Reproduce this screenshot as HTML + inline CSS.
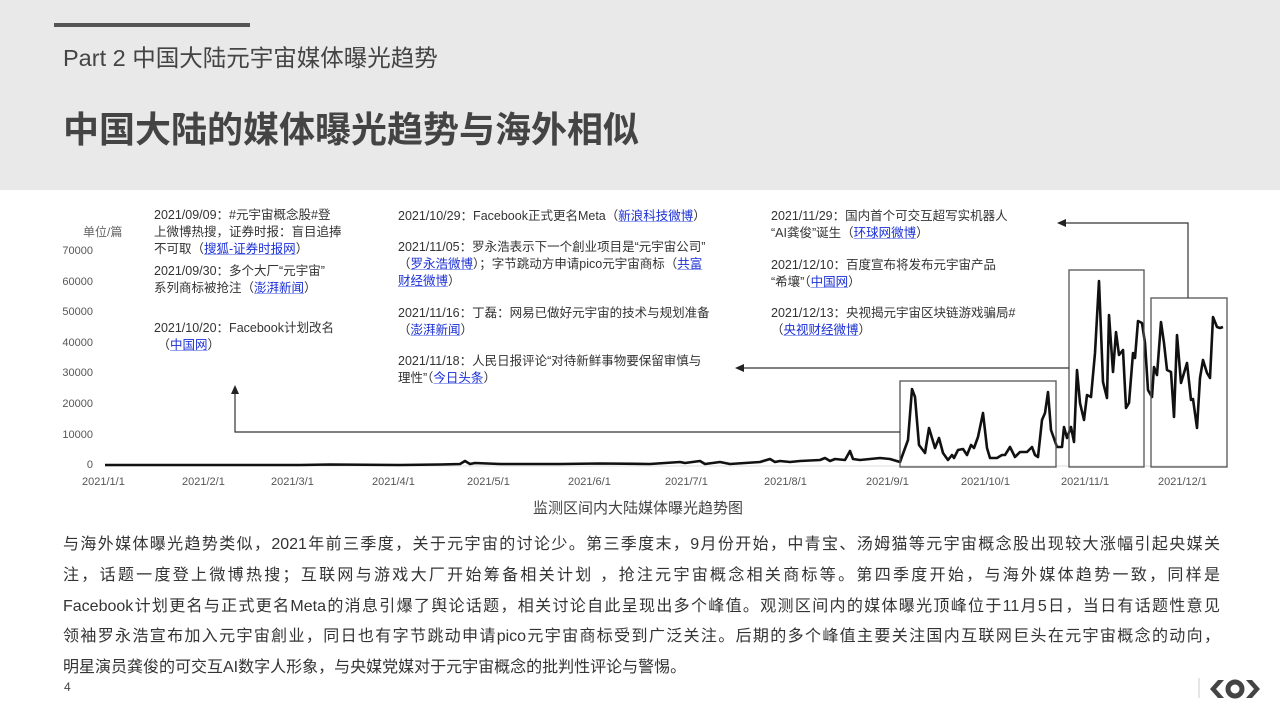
<!DOCTYPE html>
<html><head><meta charset="utf-8"><style>
*{margin:0;padding:0;box-sizing:border-box}
body{width:1280px;height:720px;position:relative;background:#fff;font-family:"Liberation Sans","Noto Sans CJK SC",sans-serif;color:#333;overflow:hidden}
.hdr{position:absolute;left:0;top:0;width:1280px;height:190px;background:#e9e9e9}
.bar{position:absolute;left:54px;top:23px;width:196px;height:4px;background:#555}
.part{position:absolute;left:63px;top:39px;font-size:23.5px;color:#444;white-space:nowrap}
.title{position:absolute;left:63px;top:101px;font-size:36px;font-weight:bold;color:#444;white-space:nowrap}
.ann{position:absolute;font-size:12.5px;line-height:17px;color:#333;white-space:nowrap}
.ann b{font-weight:normal;color:#1a2fd6;text-decoration:underline;text-decoration-color:#9aa6ee}
.yl{position:absolute;font-size:11px;color:#555;width:40px;text-align:right}
.xl{position:absolute;font-size:11px;color:#555;top:476px;white-space:nowrap}
.cap{position:absolute;left:533px;top:497px;font-size:15px;color:#444}
.para{position:absolute;left:63px;top:530px;width:1157px;font-size:16px;line-height:30.8px;color:#333}
.para div{text-align:justify;text-align-last:justify;white-space:nowrap}
.para div.l{text-align-last:left}
</style></head><body>
<div class="hdr"></div><div class="bar"></div>
<div class="part">Part 2 中国大陆元宇宙媒体曝光趋势</div>
<div class="title">中国大陆的媒体曝光趋势与海外相似</div>

<div class="yl" style="top:223px;width:70px;text-align:left;left:83px;font-size:12px;color:#666">单位/篇</div>
<div class="yl" style="left:53px;top:245px">70000</div>
<div class="yl" style="left:53px;top:276px">60000</div>
<div class="yl" style="left:53px;top:306px">50000</div>
<div class="yl" style="left:53px;top:337px">40000</div>
<div class="yl" style="left:53px;top:367px">30000</div>
<div class="yl" style="left:53px;top:398px">20000</div>
<div class="yl" style="left:53px;top:429px">10000</div>
<div class="yl" style="left:53px;top:459px">0</div>

<div class="xl" style="left:82px">2021/1/1</div>
<div class="xl" style="left:182px">2021/2/1</div>
<div class="xl" style="left:271px">2021/3/1</div>
<div class="xl" style="left:372px">2021/4/1</div>
<div class="xl" style="left:467px">2021/5/1</div>
<div class="xl" style="left:568px">2021/6/1</div>
<div class="xl" style="left:665px">2021/7/1</div>
<div class="xl" style="left:764px">2021/8/1</div>
<div class="xl" style="left:866px">2021/9/1</div>
<div class="xl" style="left:961px">2021/10/1</div>
<div class="xl" style="left:1061px">2021/11/1</div>
<div class="xl" style="left:1158px">2021/12/1</div>

<svg style="position:absolute;left:0;top:0" width="1280" height="720">
<line x1="105" y1="466" x2="1228" y2="466" stroke="#ddd" stroke-width="1"/>
<polyline fill="none" stroke="#111" stroke-width="2.6" stroke-linejoin="round" points="105,465 240,465 300,465 330,464.5 400,465 440,464.5 460,464 465,461 470,464 475,463 500,464 560,464 600,463.5 650,464 680,462 685,463 700,461 705,464 720,462 730,464 760,462 770,459 775,462 780,461 790,462 800,461 820,460 825,458 830,461 835,459 845,460 850,451 853,459 860,460 870,459 880,458 890,459 900,462 908,440 912,389 915,397 919,445 925,453 929,428 935,448 939,438 943,453 948,460 952,455 954,458 958,450 963,449 967,455 971,445 974,448 978,437 983,413 987,448 990,458 997,458 1002,455 1005,455 1010,447 1015,457 1020,452 1027,452 1032,447 1035,455 1038,457 1042,420 1045,413 1048,392 1051,430 1057,447 1062,447 1064,427 1067,438 1071,427 1074,442 1077,370 1080,403 1084,420 1087,395 1091,397 1095,353 1099,281 1103,382 1107,398 1109,315 1113,372 1116,332 1119,355 1123,350 1126,408 1129,403 1133,353 1135,358 1138,321 1142,323 1145,343 1148,390 1152,397 1154,367 1157,375 1161,322 1164,343 1167,370 1171,372 1174,417 1177,335 1181,383 1187,363 1191,400 1193,399 1197,428 1200,378 1203,360 1207,373 1210,378 1213,317 1217,327 1220,328 1223,327"/>
<g fill="none" stroke="#555" stroke-width="1.3">
<rect x="900" y="381" width="156" height="86"/>
<rect x="1069" y="270" width="75" height="197"/>
<rect x="1151" y="298" width="76" height="169"/>
</g>
<g fill="none" stroke="#333" stroke-width="1.2">
<polyline points="900,432 235,432 235,392"/>
<polyline points="1069,368 742,368"/>
<polyline points="1188,298 1188,223 1064,223"/>
</g>
<g fill="#222">
<polygon points="235,385 231,394 239,394"/>
<polygon points="735,368 744,364 744,372"/>
<polygon points="1057,223 1066,219 1066,227"/>
</g>
<line x1="1199" y1="678" x2="1199" y2="698" stroke="#ccc" stroke-width="1"/>
<g fill="#444">
<polygon points="1218,680 1224,680 1216,689 1224,698 1218,698 1210,689"/>
<polygon points="1252,680 1246,680 1254,689 1246,698 1252,698 1260,689"/>
</g>
<circle cx="1235" cy="689" r="7" fill="none" stroke="#444" stroke-width="5"/>
</svg>

<div class="ann" style="left:154px;top:207px">2021/09/09：#元宇宙概念股#登<br>上微博热搜，证券时报：盲目追捧<br>不可取（<b>搜狐-证券时报网</b>）</div>
<div class="ann" style="left:154px;top:263px">2021/09/30：多个大厂“元宇宙”<br>系列商标被抢注（<b>澎湃新闻</b>）</div>
<div class="ann" style="left:154px;top:320px">2021/10/20：Facebook计划改名<br>&nbsp;（<b>中国网</b>）</div>

<div class="ann" style="left:398px;top:208px">2021/10/29：Facebook正式更名Meta（<b>新浪科技微博</b>）</div>
<div class="ann" style="left:398px;top:239px">2021/11/05：罗永浩表示下一个創业项目是“元宇宙公司”<br>（<b>罗永浩微博</b>）；字节跳动方申请pico元宇宙商标（<b>共富<br>财经微博</b>）</div>
<div class="ann" style="left:398px;top:305px">2021/11/16：丁磊：网易已做好元宇宙的技术与规划准备<br>（<b>澎湃新闻</b>）</div>
<div class="ann" style="left:398px;top:353px">2021/11/18：人民日报评论“对待新鲜事物要保留审慎与<br>理性”（<b>今日头条</b>）</div>

<div class="ann" style="left:771px;top:208px">2021/11/29：国内首个可交互超写实机器人<br>“AI龚俊”诞生（<b>环球网微博</b>）</div>
<div class="ann" style="left:771px;top:257px">2021/12/10：百度宣布将发布元宇宙产品<br>“希壤”（<b>中国网</b>）</div>
<div class="ann" style="left:771px;top:305px">2021/12/13：央视揭元宇宙区块链游戏骗局#<br>（<b>央视财经微博</b>）</div>

<div class="cap">监测区间内大陆媒体曝光趋势图</div>

<div class="para">
<div>与海外媒体曝光趋势类似，2021年前三季度，关于元宇宙的讨论少。第三季度末，9月份开始，中青宝、汤姆猫等元宇宙概念股出现较大涨幅引起央媒关</div>
<div>注，话题一度登上微博热搜；互联网与游戏大厂开始筹备相关计划 ，抢注元宇宙概念相关商标等。第四季度开始，与海外媒体趋势一致，同样是</div>
<div>Facebook计划更名与正式更名Meta的消息引爆了舆论话题，相关讨论自此呈现出多个峰值。观测区间内的媒体曝光顶峰位于11月5日，当日有话题性意见</div>
<div>领袖罗永浩宣布加入元宇宙創业，同日也有字节跳动申请pico元宇宙商标受到广泛关注。后期的多个峰值主要关注国内互联网巨头在元宇宙概念的动向，</div>
<div class="l">明星演员龚俊的可交互AI数字人形象，与央媒党媒对于元宇宙概念的批判性评论与警惕。</div>
</div>
<div style="position:absolute;left:64px;top:680px;font-size:12px;color:#444">4</div>
</body></html>
